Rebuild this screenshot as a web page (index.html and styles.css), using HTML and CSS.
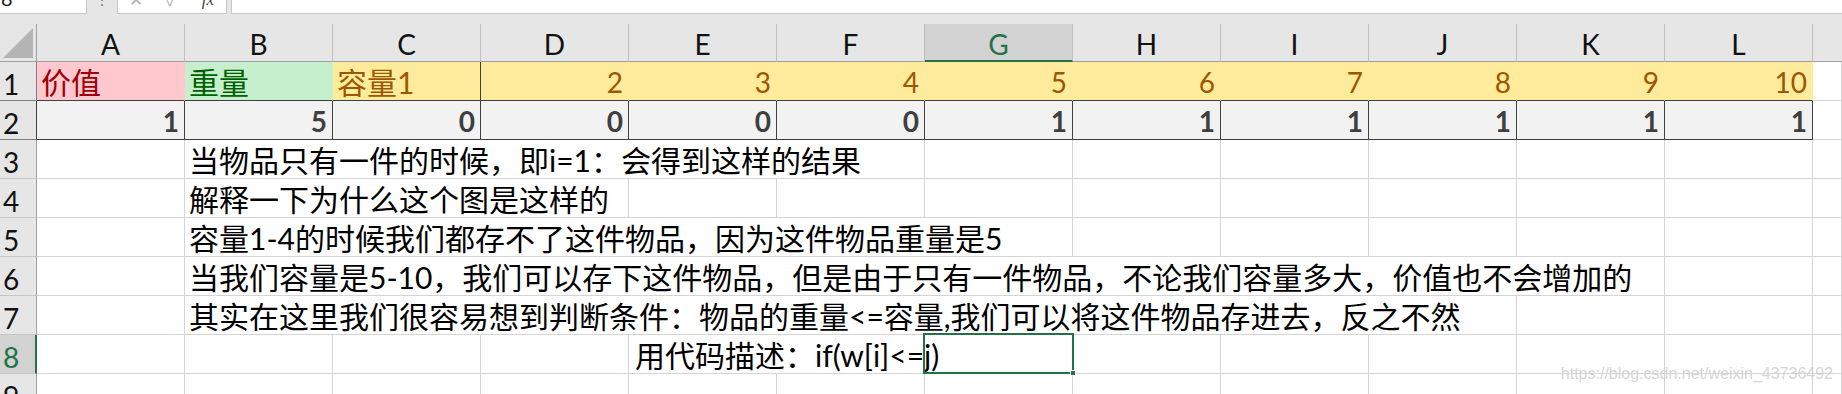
FILE: index.html
```html
<!DOCTYPE html>
<html>
<head>
  <title>Sheet1</title>
  <link rel="stylesheet" href="styles.css">
</head>
<body>
  <div class="app">
    <div class="toolbar">
      <div class="namebox"><span>8</span></div>
      <div class="grip"><span>⋮</span></div>
      <div class="tools">
        <span class="muted">✕</span>
        <span class="muted">✓</span>
        <span class="fx">fx</span>
      </div>
      <div class="formula"></div>
    </div>
    <div class="strip"></div>

    <div class="sheet">
      <!-- column headers -->
      <div class="corner">
        <svg width="36" height="37" viewBox="0 0 36 37"><polygon points="33,4 33,34 3,34" fill="#b4b4b4"/></svg>
      </div>
      <div class="ch">A</div>
      <div class="ch">B</div>
      <div class="ch">C</div>
      <div class="ch">D</div>
      <div class="ch">E</div>
      <div class="ch">F</div>
      <div class="ch sel">G</div>
      <div class="ch">H</div>
      <div class="ch">I</div>
      <div class="ch">J</div>
      <div class="ch">K</div>
      <div class="ch">L</div>
      <div class="ch last"></div>

      <!-- row 1 -->
      <div class="rh top">1</div>
      <div class="c bad">价值</div>
      <div class="c good">重量</div>
      <div class="c neutral split">容量1</div>
      <div class="c neutral n">2</div>
      <div class="c neutral n">3</div>
      <div class="c neutral n">4</div>
      <div class="c neutral n">5</div>
      <div class="c neutral n">6</div>
      <div class="c neutral n">7</div>
      <div class="c neutral n">8</div>
      <div class="c neutral n">9</div>
      <div class="c neutral n">10</div>
      <div class="c"></div>

      <!-- row 2 -->
      <div class="rh out-head">2</div>
      <div class="c out n">1</div>
      <div class="c out n">5</div>
      <div class="c out n">0</div>
      <div class="c out n">0</div>
      <div class="c out n">0</div>
      <div class="c out n">0</div>
      <div class="c out n">1</div>
      <div class="c out n">1</div>
      <div class="c out n">1</div>
      <div class="c out n">1</div>
      <div class="c out n">1</div>
      <div class="c out n">1</div>
      <div class="c"></div>

      <!-- row 3 -->
      <div class="rh">3</div>
      <div class="c"></div>
      <div class="c span5">当物品只有一件的时候，即i=1：会得到这样的结果</div>
      <div class="c"></div><div class="c"></div><div class="c"></div>
      <div class="c"></div><div class="c"></div><div class="c"></div>
      <div class="c"></div>

      <!-- row 4 -->
      <div class="rh">4</div>
      <div class="c"></div>
      <div class="c span3">解释一下为什么这个图是这样的</div>
      <div class="c"></div><div class="c"></div><div class="c"></div><div class="c"></div>
      <div class="c"></div><div class="c"></div><div class="c"></div><div class="c"></div>
      <div class="c"></div>

      <!-- row 5 -->
      <div class="rh">5</div>
      <div class="c"></div>
      <div class="c span6">容量1-4的时候我们都存不了这件物品，因为这件物品重量是5</div>
      <div class="c"></div><div class="c"></div><div class="c"></div>
      <div class="c"></div><div class="c"></div>
      <div class="c"></div>

      <!-- row 6 -->
      <div class="rh">6</div>
      <div class="c"></div>
      <div class="c span10">当我们容量是5-10，我们可以存下这件物品，但是由于只有一件物品，不论我们容量多大，价值也不会增加的</div>
      <div class="c"></div>
      <div class="c"></div>

      <!-- row 7 -->
      <div class="rh">7</div>
      <div class="c"></div>
      <div class="c span9">其实在这里我们很容易想到判断条件：物品的重量&lt;=容量,我们可以将这件物品存进去，反之不然</div>
      <div class="c"></div><div class="c"></div>
      <div class="c"></div>

      <!-- row 8 -->
      <div class="rh sel">8</div>
      <div class="c"></div>
      <div class="c"></div>
      <div class="c"></div>
      <div class="c"></div>
      <div class="c span3 code">用代码描述：if(w[i]&lt;=j)<div class="selection"><div class="handle"></div></div></div>
      <div class="c"></div><div class="c"></div><div class="c"></div>
      <div class="c"></div><div class="c"></div>
      <div class="c"></div>

      <!-- row 9 -->
      <div class="rh">9</div>
      <div class="c"></div><div class="c"></div><div class="c"></div><div class="c"></div>
      <div class="c"></div><div class="c"></div><div class="c"></div><div class="c"></div>
      <div class="c"></div><div class="c"></div><div class="c"></div><div class="c"></div>
      <div class="c"></div>
    </div>

    <div class="watermark">https://blog.csdn.net/weixin_43736492</div>
  </div>
</body>
</html>
```

FILE: styles.css
```css
html, body {
  margin: 0;
  padding: 0;
}

body {
  width: 1842px;
  height: 394px;
  overflow: hidden;
  background: #fff;
  font-family: "Lato", "Noto Sans CJK SC", sans-serif;
}

.app {
  position: relative;
  height: 394px;
  overflow: hidden;
}

/* formula bar, cut off at the top */
.toolbar {
  display: flex;
  height: 14px;
  background: #e6e6e6;
}

.namebox {
  width: 87px;
  box-sizing: border-box;
  background: #fff;
  border-right: 1px solid #c6c6c6;
  border-bottom: 1px solid #c6c6c6;
  overflow: hidden;
}

.namebox span {
  display: block;
  margin: -12px 0 0 1px;
  font-size: 20px;
  line-height: 20px;
  color: #222;
}

.grip {
  width: 30px;
  overflow: hidden;
  text-align: center;
  color: #8a8a8a;
}

.grip span {
  display: block;
  margin-top: -9px;
  font-size: 16px;
  line-height: 16px;
}

.tools {
  display: flex;
  width: 110px;
  box-sizing: border-box;
  margin-right: 4px;
  background: #fff;
  border: 1px solid #c6c6c6;
  border-top: none;
  overflow: hidden;
}

.tools span {
  display: block;
  width: 36px;
  margin-top: -9px;
  text-align: center;
  font-size: 17px;
  line-height: 18px;
}

.tools .muted {
  color: #b3b3b3;
}

.tools .fx {
  color: #444;
  font-style: italic;
  font-family: "Liberation Serif", serif;
}

.formula {
  flex: 1;
  background: #fff;
  border-left: 1px solid #c6c6c6;
  border-bottom: 1px solid #c6c6c6;
}

.strip {
  height: 10px;
  background: #e6e6e6;
}

/* the grid itself */
.sheet {
  display: grid;
  grid-template-columns: 37px repeat(12, 148px) 1fr;
  grid-template-rows: 38px;
  grid-auto-rows: 39px;
}

.sheet > div {
  box-sizing: border-box;
  white-space: nowrap;
}

.corner {
  background: #e6e6e6;
  border-right: 1px solid #9f9f9f;
  border-bottom: 1px solid #9f9f9f;
}

.corner svg {
  display: block;
}

.ch {
  background: #e6e6e6;
  border-right: 1px solid #c0c0c0;
  border-bottom: 1px solid #9f9f9f;
  text-align: center;
  font-size: 28px;
  line-height: 36px;
  padding-top: 2px;
  color: #111;
}

.ch.last {
  border-right: none;
}

.ch.sel {
  background: #d2d2d2;
  color: #217346;
  border-bottom: 2px solid #217346;
}

.rh {
  background: #e6e6e6;
  border-right: 1px solid #9f9f9f;
  border-bottom: 1px solid #c6c6c6;
  font-size: 28px;
  line-height: 36px;
  padding: 4px 0 0 3px;
  color: #111;
}

.rh.top {
  border-right-color: #7f7f7f;
  border-bottom-color: #7f7f7f;
}

.rh.out-head {
  border-right-color: #3f3f3f;
  border-bottom-color: #7f7f7f;
}

.rh.sel {
  background: #d2d2d2;
  color: #217346;
  border-right: 2px solid #217346;
}

.c {
  background: #fff;
  border-right: 1px solid #d4d4d4;
  border-bottom: 1px solid #d4d4d4;
  padding: 2px 4px 0;
  font-size: 30px;
  line-height: 36px;
  color: #000;
}

.n {
  text-align: right;
  font-size: 28px;
  padding-right: 5px;
}

/* cell styles of row 1 and 2 */
.bad {
  background: #ffc7ce;
  color: #9c0006;
  border-right-color: #ffc7ce;
  border-bottom-color: #3f3f3f;
}

.good {
  background: #c6efce;
  color: #006100;
  border-right-color: #c6efce;
  border-bottom-color: #3f3f3f;
}

.neutral {
  background: #ffeb9c;
  color: #9c5700;
  border-right-color: #ffeb9c;
  border-bottom-color: #3f3f3f;
}

.neutral.split {
  border-right-color: #3f3f3f;
}

.out {
  background: #f2f2f2;
  color: #3f3f3f;
  font-weight: 700;
  border-right-color: #3f3f3f;
  border-bottom-color: #3f3f3f;
}

/* text that runs over neighbouring cells */
.span3 { grid-column: span 3; }
.span5 { grid-column: span 5; }
.span6 { grid-column: span 6; }
.span9 { grid-column: span 9; }
.span10 { grid-column: span 10; }

.code {
  position: relative;
  padding-left: 6px;
}

.selection {
  position: absolute;
  top: -2px;
  right: -2px;
  bottom: -1px;
  width: 151px;
  box-sizing: border-box;
  border: 2px solid #217346;
}

.handle {
  position: absolute;
  right: -4px;
  bottom: -4px;
  width: 6px;
  height: 6px;
  background: #217346;
  border: 1px solid #fff;
  box-sizing: border-box;
}

.watermark {
  position: absolute;
  right: 9px;
  bottom: 11px;
  font-family: "Liberation Sans", sans-serif;
  font-size: 16px;
  line-height: 18px;
  color: rgba(170, 170, 170, 0.5);
  text-shadow: 0 0 1px rgba(255, 255, 255, 0.8);
}
```
